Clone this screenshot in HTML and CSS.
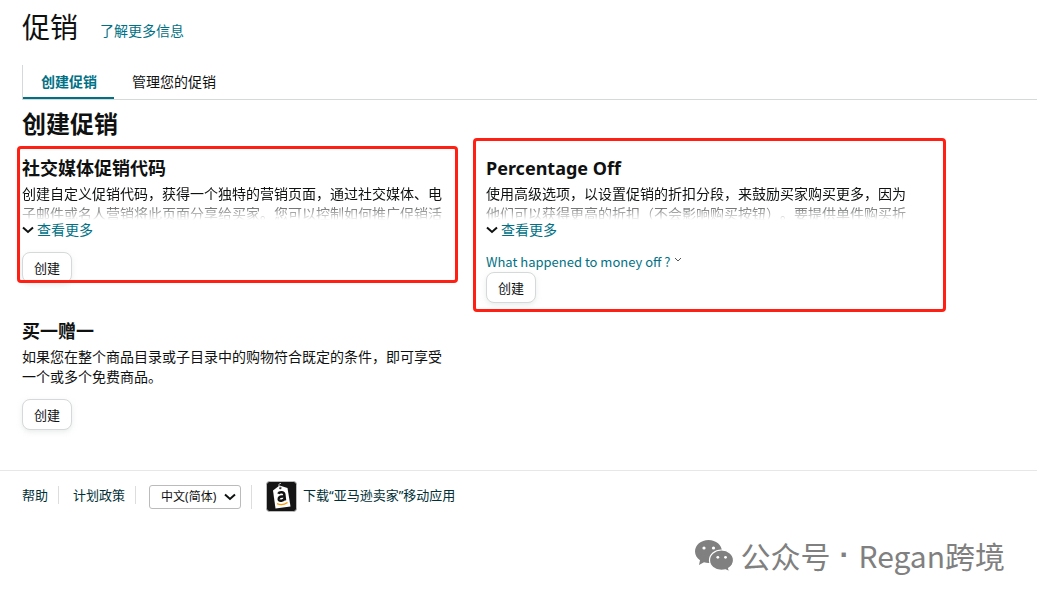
FILE: index.html
```html
<!DOCTYPE html>
<html lang="zh-CN">
<head>
<meta charset="utf-8">
<meta name="viewport" content="width=device-width, initial-scale=1">
<title>促销</title>
<link rel="stylesheet" href="styles.css">
</head>
<body>
<header class="page-header">
  <h1 class="page-title">促销</h1>
  <a class="link" href="#">了解更多信息</a>
</header>
<nav class="tabs">
  <a class="tab tab-active" href="#">创建促销</a>
  <a class="tab" href="#">管理您的促销</a>
</nav>
<main class="content">
  <h2 class="section-title">创建促销</h2>
  <div class="cards">
    <section class="card marked">
      <h3 class="card-title">社交媒体促销代码</h3>
      <p class="card-text clamped">创建自定义促销代码，获得一个独特的营销页面，通过社交媒体、电子邮件或名人营销将此页面分享给买家。您可以控制如何推广促销活</p>
      <a class="more link" href="#"><svg class="chevron" viewBox="0 0 12 8"><path d="M1 1.500 6 6l5-4.500"/></svg>查看更多</a>
      <button class="button" type="button">创建</button>
    </section>
    <section class="card marked marked-wide">
      <h3 class="card-title">Percentage Off</h3>
      <p class="card-text clamped">使用高级选项，以设置促销的折扣分段，来鼓励买家购买更多，因为他们可以获得更高的折扣（不会影响购买按钮）。要提供单件购买折</p>
      <a class="more link" href="#"><svg class="chevron" viewBox="0 0 12 8"><path d="M1 1.500 6 6l5-4.500"/></svg>查看更多</a>
      <a class="question link" href="#">What happened to money off ?<svg class="caret" viewBox="0 0 8 6"><path d="M1 1l3 3 3-3"/></svg></a>
      <button class="button button-tight" type="button">创建</button>
    </section>
    <section class="card">
      <h3 class="card-title">买一赠一</h3>
      <p class="card-text">如果您在整个商品目录或子目录中的购物符合既定的条件，即可享受一个或多个免费商品。</p>
      <button class="button" type="button">创建</button>
    </section>
  </div>
</main>
<footer class="footer">
  <a class="footer-link" href="#">帮助</a>
  <a class="footer-link" href="#">计划政策</a>
  <div class="language">
    <select class="language-select" aria-label="语言"><option>中文(简体)</option></select>
    <svg class="chevron language-chevron" viewBox="0 0 12 8"><path d="M1 1.500 6 6l5-4.500"/></svg>
  </div>
  <a class="app-link" href="#">
    <svg class="app-icon" viewBox="0 0 31 31">
      <rect x=".5" y=".5" width="30" height="30" rx="3" fill="#151515" stroke="#bbb"/>
      <path d="M7 9.500 13.500 4.500 21.500 7 24.500 25.500 9.500 27.500z" fill="#fff"/>
      <circle cx="14.300" cy="7" r="1.200" fill="#333"/>
      <path d="M14.300 7C12 5 12.500 2 15 2.500" fill="none" stroke="#ddd" stroke-width=".8"/>
      <path d="M12.300 12.800c1-2.300 5.700-2.300 6 .5l.7 6.200M18.500 15.300c-3.200-.2-6 .5-5.800 2.900.3 2.300 4.900 2 6-1" fill="none" stroke="#111" stroke-width="2.500"/>
      <path d="M11 22.700q5.500 2.300 10.500-1.200" fill="none" stroke="#f90" stroke-width="1.400"/>
    </svg>
    <span class="app-label">下载“亚马逊卖家”移动应用</span>
  </a>
</footer>
<div class="signature">
  <svg class="signature-icon" viewBox="0 0 40 33">
    <path d="M14.500 1C7 1 1 6 1 12.500c0 3.600 2 6.700 5 8.800L5 26l5-2.700c1.500.4 3 .6 4.500.6 7.500 0 13.500-5 13.500-11.400S22 1 14.500 1z" fill="#808080"/>
    <path d="M27.500 11c-6.800 0-12 4.400-12 10.200s5.200 10.200 12 10.200c1.400 0 2.800-.2 4.100-.5l4 1.900-1-3.600c3-1.800 4.900-4.800 4.900-8 0-5.800-5.200-10.200-12-10.200z" fill="#808080" stroke="#fff" stroke-width="1.200"/>
    <g fill="#fff"><circle cx="10" cy="9" r="1.600"/><circle cx="19.500" cy="9" r="1.600"/><circle cx="23.800" cy="18.300" r="1.400"/><circle cx="31.500" cy="18.300" r="1.400"/></g>
  </svg>
  <span>公众号</span><span class="signature-dot">·</span><span>Regan跨境</span>
</div>
</body>
</html>
```
FILE: styles.css
```css
* { box-sizing: border-box; }
body {
  margin: 0;
  background: #fff;
  color: #0f1111;
  font: 14px/20px "Noto Sans", "Noto Sans CJK SC", sans-serif;
  text-spacing-trim: space-all;
}
h1, h2, h3, p { margin: 0; }
a { color: inherit; text-decoration: none; }
.link { color: #007185; }
.page-header {
  display: flex;
  align-items: center;
  gap: 22px;
  padding: 7px 22px 0;
}
.page-title { font-size: 28px; line-height: 40px; font-weight: 400; }
.page-header .link { padding-top: 8px; }
.tabs {
  display: flex;
  margin: 18px 0 0 22px;
  border-left: 1px solid #d5d9d9;
  border-bottom: 1px solid #d5d9d9;
}
.tab { padding: 7px 17px 7px 18px; }
.tab-active {
  color: #007185;
  font-weight: 700;
  box-shadow: inset 0 -2px #007185;
}
.content { padding: 8px 22px 40px; }
.section-title { font-size: 24px; line-height: 32px; font-weight: 700; }
.cards {
  display: grid;
  grid-template-columns: repeat(auto-fill, 420px);
  gap: 16px 44px;
  margin-top: 16px;
}
.card {
  position: relative;
  display: flex;
  flex-direction: column;
  align-items: flex-start;
}
.marked::after {
  content: "";
  position: absolute;
  inset: -10px -16px 20px -5px;
  border: 3px solid #ff2013;
  border-radius: 4px;
  pointer-events: none;
}
.marked-wide::after { inset: -18px -40px -9px -13px; }
.card-title { font-size: 18px; line-height: 24px; font-weight: 700; margin-bottom: 4px; }
.clamped {
  height: 36px;
  overflow: hidden;
  -webkit-mask-image: linear-gradient(#000 16px, transparent 36px);
  mask-image: linear-gradient(#000 16px, transparent 36px);
}
.more { display: flex; align-items: center; gap: 3px; }
.chevron { width: 12px; height: 8px; fill: none; stroke: #0f1111; stroke-width: 2; }
.question {
  margin-top: 12px;
  font-family: "Noto Sans CJK SC", sans-serif;
  font-size: 13px;
}
.caret { width: 8px; height: 6px; margin: 0 0 4px 4px; fill: none; stroke: #555; }
.button {
  margin-top: 12px;
  height: 31px;
  padding: 0 11px;
  border: 1px solid #d5d9d9;
  border-radius: 8px;
  background: #fff;
  box-shadow: 0 2px 5px rgba(213, 217, 217, .5);
  color: inherit;
  font: inherit;
  font-size: 13px;
}
.button-tight { margin-top: 0; }
.footer {
  display: flex;
  align-items: center;
  padding: 10px 22px 0;
  border-top: 1px solid #e7e7e7;
  color: #002f36;
  font-size: 13px;
  line-height: 18px;
}
.footer-link {
  margin: 0 14px 4px 0;
  padding-right: 10px;
  border-right: 1px solid #ddd;
}
.footer-link + .footer-link { margin-right: 13px; }
.language {
  position: relative;
  padding-right: 10px;
  margin-right: 14px;
  border-right: 1px solid #ddd;
}
.language-select {
  appearance: none;
  display: block;
  width: 92px;
  height: 24px;
  padding: 0 0 0 11px;
  border: 1px solid #bbb;
  border-radius: 3px;
  background: #fff;
  color: #0f1111;
  font: inherit;
  font-size: 12px;
}
.language-chevron { position: absolute; right: 15px; top: 8px; pointer-events: none; }
.app-link { display: flex; align-items: center; gap: 6px; }
.app-icon { width: 31px; height: 31px; }
.app-label { padding-bottom: 4px; }
.signature {
  display: flex;
  align-items: center;
  justify-content: flex-end;
  padding: 21px 32px 0 22px;
  color: #808080;
  font: 30px/40px "Noto Sans CJK SC", sans-serif;
}
.signature-icon { width: 40px; height: 33px; margin-right: 6px; }
.signature-dot { width: 28px; text-align: center; line-height: 44px; font-weight: 700; font-family: "Liberation Sans", sans-serif; }
```
